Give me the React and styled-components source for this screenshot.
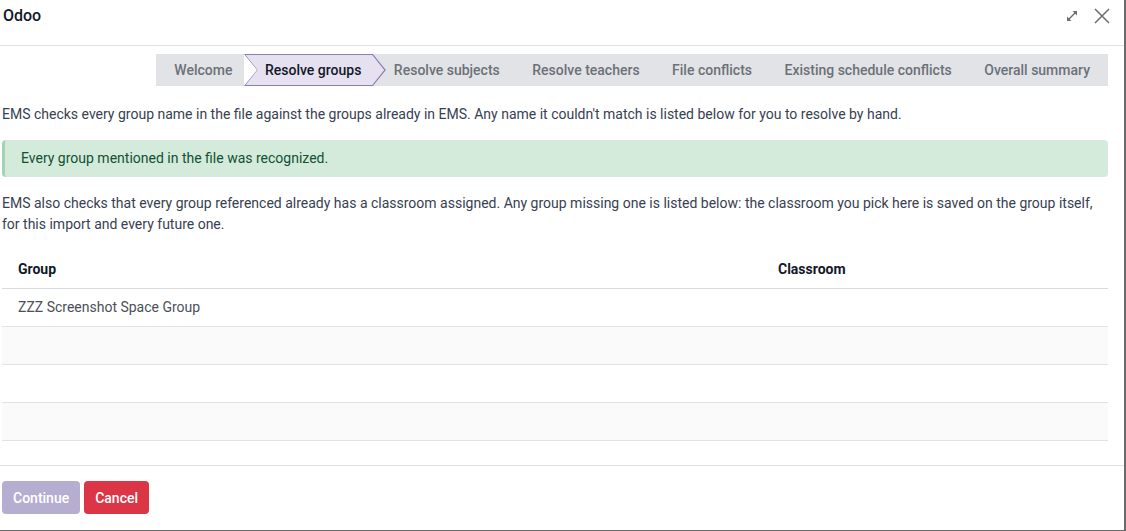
import React from "react";
import styled, { createGlobalStyle } from "styled-components";

const GlobalStyle = createGlobalStyle`
  html, body {
    margin: 0;
    padding: 0;
    background: #ffffff;
  }
  body {
    font-family: Roboto, "Noto Sans", "Liberation Sans", sans-serif;
    font-size: 14px;
    color: #374151;
  }
  * {
    box-sizing: border-box;
  }
`;

const steps = [
  "Welcome",
  "Resolve groups",
  "Resolve subjects",
  "Resolve teachers",
  "File conflicts",
  "Existing schedule conflicts",
  "Overall summary",
];

const rows = ["ZZZ Screenshot Space Group", "", "", ""];

const ExpandIcon = () => (
  <svg width="14" height="14" viewBox="0 0 14 14">
    <line x1="3" y1="11" x2="11" y2="3" stroke="#6b6f75" strokeWidth="1.4" />
    <polygon points="7.5,2 12,2 12,6.5" fill="#6b6f75" />
    <polygon points="2,7.5 2,12 6.5,12" fill="#6b6f75" />
  </svg>
);

const CloseIcon = () => (
  <svg width="16" height="16" viewBox="0 0 16 16">
    <path d="M1 1 L15 15 M15 1 L1 15" stroke="#6b6f75" strokeWidth="1.5" fill="none" />
  </svg>
);

const App = () => {
  return (
    <Dialog>
      <GlobalStyle />
      <Header>
        <Title>Odoo</Title>
        <HeaderTools>
          <IconButton aria-label="Expand">
            <ExpandIcon />
          </IconButton>
          <IconButton aria-label="Close">
            <CloseIcon />
          </IconButton>
        </HeaderTools>
      </Header>

      <Body>
        <StatusBar>
          {steps.map((s, i) => (
            <Step key={s} $active={i === 1} $first={i === 0} $last={i === steps.length - 1}>
              {s}
            </Step>
          ))}
        </StatusBar>

        <Text>
          EMS checks every group name in the file against the groups already in EMS. Any name it
          couldn't match is listed below for you to resolve by hand.
        </Text>

        <Alert>Every group mentioned in the file was recognized.</Alert>

        <Text>
          EMS also checks that every group referenced already has a classroom assigned. Any group
          missing one is listed below: the classroom you pick here is saved on the group itself,
          for this import and every future one.
        </Text>

        <Table>
          <thead>
            <tr>
              <Th style={{ width: 760 }}>Group</Th>
              <Th>Classroom</Th>
            </tr>
          </thead>
          <tbody>
            {rows.map((r, i) => (
              <Tr key={i} $striped={i % 2 === 1}>
                <Td>{r}</Td>
                <Td></Td>
              </Tr>
            ))}
          </tbody>
        </Table>
      </Body>

      <Footer>
        <Button $variant="primary" disabled>
          Continue
        </Button>
        <Button $variant="danger">Cancel</Button>
      </Footer>
    </Dialog>
  );
};

const Dialog = styled.div`
  width: 1126px;
  height: 531px;
  display: flex;
  flex-direction: column;
  background: #ffffff;
  border-right: 2px solid #6a6a6a;
  border-bottom: 1px solid #6a6a6a;
  overflow: hidden;
`;

const Header = styled.div`
  height: 46px;
  flex: none;
  display: flex;
  align-items: flex-start;
  justify-content: space-between;
  padding: 6px 14px 0 3px;
  border-bottom: 1px solid #dee2e6;
`;

const Title = styled.div`
  font-size: 16px;
  line-height: 19px;
  font-weight: 500;
  color: #111827;
`;

const HeaderTools = styled.div`
  display: flex;
  align-items: center;
  gap: 15px;
  height: 19px;
`;

const IconButton = styled.button`
  border: 0;
  background: none;
  padding: 0;
  display: flex;
  align-items: center;
  cursor: pointer;
`;

const Body = styled.div`
  flex: 1;
  padding: 8px 16px 0 2px;
`;

const StatusBar = styled.div`
  display: flex;
  justify-content: flex-end;
  margin-bottom: 18px;
`;

const Step = styled.div`
  position: relative;
  z-index: ${(p) => (p.$active ? 2 : 1)};
  height: 32px;
  line-height: 32px;
  padding: 0 ${(p) => (p.$last ? "18px" : "11.5px")} 0 ${(p) => (p.$first ? "18px" : "21px")};
  font-size: 14px;
  font-weight: 500;
  white-space: nowrap;
  color: ${(p) => (p.$active ? "#111827" : "#6c7178")};
  background: ${(p) => (p.$active ? "transparent" : "#e2e3e7")};

  &::before {
    content: "";
    position: absolute;
    top: 0;
    bottom: 0;
    left: ${(p) => (p.$active ? "0" : "100%")};
    right: -13px;
    display: ${(p) => (p.$last ? "none" : "block")};
    z-index: -1;
    background: ${(p) => (p.$active ? "#8a7db3" : "#ffffff")};
    clip-path: ${(p) =>
      p.$active
        ? "polygon(0 0, calc(100% - 13px) 0, 100% 50%, calc(100% - 13px) 100%, 0 100%, 13px 50%)"
        : "polygon(0 0, 1.2px 0, 14px 50%, 1.2px 100%, 0 100%, 12.8px 50%)"};
  }

  &::after {
    content: "";
    position: absolute;
    top: 0;
    bottom: 0;
    left: 0;
    right: -13px;
    display: ${(p) => (p.$active ? "block" : "none")};
    z-index: -1;
    background: #e6e1f0;
    clip-path: polygon(
      1.6px 1px,
      calc(100% - 13.6px) 1px,
      calc(100% - 1.6px) 50%,
      calc(100% - 13.6px) calc(100% - 1px),
      1.6px calc(100% - 1px),
      13.6px 50%
    );
  }
`;

const Text = styled.p`
  margin: 0 0 15px;
  font-size: 14px;
  line-height: 21px;
  color: #374151;
`;

const Alert = styled.div`
  margin-bottom: 16px;
  padding: 8px 16px;
  line-height: 21px;
  font-size: 14px;
  color: #0f5132;
  background: #d4ebdc;
  border-left: 3px solid #a6d2b6;
  border-radius: 4px;
`;

const Table = styled.table`
  width: 100%;
  border-collapse: collapse;
  table-layout: fixed;
`;

const Th = styled.th`
  height: 38px;
  padding: 0 16px;
  text-align: left;
  font-size: 14px;
  font-weight: 700;
  color: #111827;
  border-bottom: 1px solid #d8dade;
`;

const Tr = styled.tr`
  background: ${(p) => (p.$striped ? "#fafafb" : "#ffffff")};
`;

const Td = styled.td`
  height: 38px;
  padding: 0 16px;
  font-size: 14px;
  color: #4b5058;
  border-bottom: 1px solid #e0e2e6;
`;

const Footer = styled.div`
  flex: none;
  height: 65px;
  display: flex;
  align-items: flex-start;
  gap: 4px;
  padding: 15px 0 0 2px;
  border-top: 1px solid #dee2e6;
`;

const Button = styled.button`
  height: 33px;
  padding: 0 11px;
  border: 0;
  border-radius: 4px;
  font-family: Roboto, "Noto Sans", "Liberation Sans", sans-serif;
  font-size: 14px;
  font-weight: 500;
  color: #ffffff;
  background: ${(p) => (p.$variant === "danger" ? "#dc3545" : "#b6aed0")};
  cursor: ${(p) => (p.disabled ? "default" : "pointer")};
`;

export default App;
